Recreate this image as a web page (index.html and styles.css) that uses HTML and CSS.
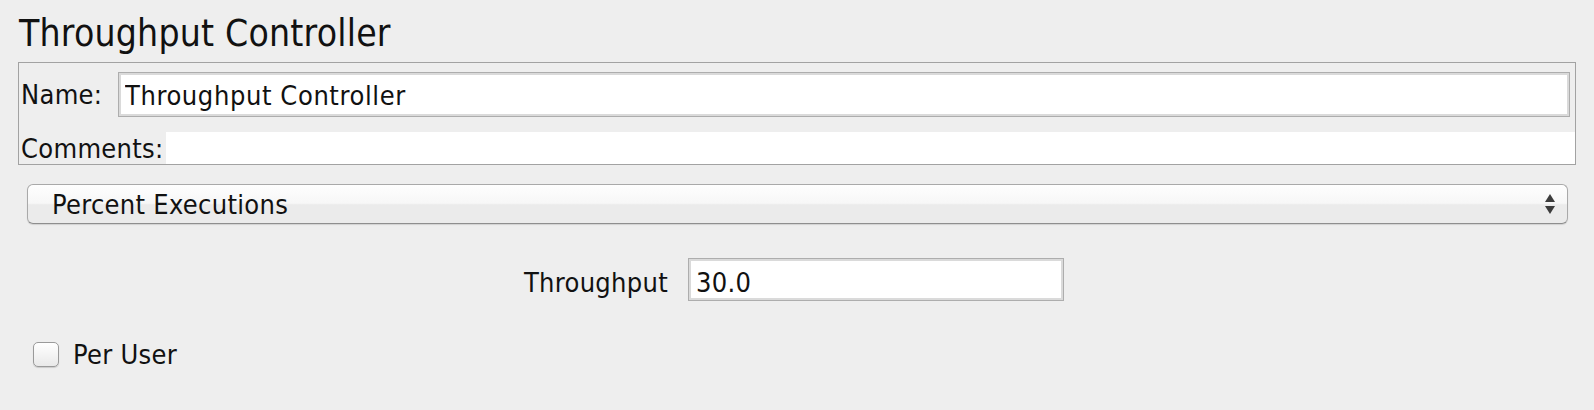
FILE: index.html
```html
<html lang="en">
<head>
    <meta charset="UTF-8">
    <title>Throughput Controller</title>
    <link rel="stylesheet" href="styles.css">
</head>
<body>
    <div class="title">Throughput Controller</div>
    <div class="namepanel">
        <div class="row name-row">
            <label class="lbl name-lbl">Name:</label>
            <input type="text" class="field name-field" value="Throughput Controller">
        </div>
        <div class="row comments-row">
            <label class="lbl comments-lbl">Comments:</label>
            <div class="comments-area"></div>
        </div>
    </div>
    <div class="combo">
        <span class="combo-text">Percent Executions</span>
        <svg class="combo-arrows" width="12" height="22" viewBox="0 0 12 22">
            <polygon points="6,1 11,9 1,9" fill="#3c3c3c"/>
            <polygon points="1,13 11,13 6,21" fill="#3c3c3c"/>
        </svg>
    </div>
    <div class="tp-row">
        <label class="lbl tp-lbl">Throughput</label>
        <input type="text" class="field tp-field" value="30.0">
    </div>
    <div class="check-row">
        <span class="checkbox"></span>
        <span class="lbl">Per User</span>
    </div>
</body>
</html>
```

FILE: styles.css
```css
body {
    margin: 0;
    background: #eeeeee;
    font-family: "DejaVu Sans", sans-serif;
    font-stretch: condensed;
    font-size: 27px;
    letter-spacing: 0.3px;
    color: #111;
}
.title {
    padding: 12px 0 0 19px;
    height: 44px;
    line-height: 44px;
    font-size: 37px;
    letter-spacing: 0.2px;
    margin-bottom: 6px;
}
.namepanel {
    margin-left: 18px;
    width: 1558px;
    box-sizing: border-box;
    border: 1px solid #a2a2a2;
    padding: 9px 0 0 2px;
}
.row {
    display: flex;
    align-items: center;
}
.name-row {
    height: 45px;
    padding-right: 5px;
}
.name-lbl {
    width: 97px;
}
.field {
    height: 100%;
    box-sizing: border-box;
    border: 1px solid #adadad;
    box-shadow: inset 0 0 0 2px #dadada;
    background: #fff;
    font: inherit;
    letter-spacing: inherit;
    color: #111;
    outline: none;
    margin: 0;
}
.name-field {
    flex: 1;
    padding: 1px 0 0 6px;
    letter-spacing: 0.6px;
}
.comments-row {
    margin-top: 15px;
    height: 32px;
}
.comments-lbl {
    width: 145px;
}
.comments-area {
    flex: 1;
    height: 100%;
    background: #fff;
}
.combo {
    margin: 19px 0 0 27px;
    width: 1541px;
    height: 40px;
    box-sizing: border-box;
    border: 1px solid #a9a9a9;
    border-bottom-color: #8e8e8e;
    border-radius: 6px;
    background: linear-gradient(#fefefe, #f7f7f7 48%, #ebebeb 52%, #ebebeb);
    box-shadow: 0 1px 1px rgba(0, 0, 0, 0.12);
    display: flex;
    align-items: center;
    justify-content: space-between;
    padding: 0 11px 0 24px;
}
.combo-arrows {
    display: block;
}
.tp-row {
    margin-top: 34px;
    height: 43px;
    display: flex;
    justify-content: center;
    align-items: center;
    gap: 20px;
    padding-right: 6px;
}
.tp-lbl {
    padding-top: 5px;
}
.tp-field {
    width: 376px;
    padding: 5px 0 0 7px;
}
.check-row {
    margin: 38px 0 0 33px;
    display: flex;
    align-items: center;
    gap: 14px;
}
.checkbox {
    width: 26px;
    height: 25px;
    box-sizing: border-box;
    border: 1px solid #9a9a9a;
    border-radius: 5px;
    background: linear-gradient(#ffffff, #f4f4f4 50%, #e9e9e9);
    box-shadow: 0 1px 1px rgba(0, 0, 0, 0.15);
}
```
